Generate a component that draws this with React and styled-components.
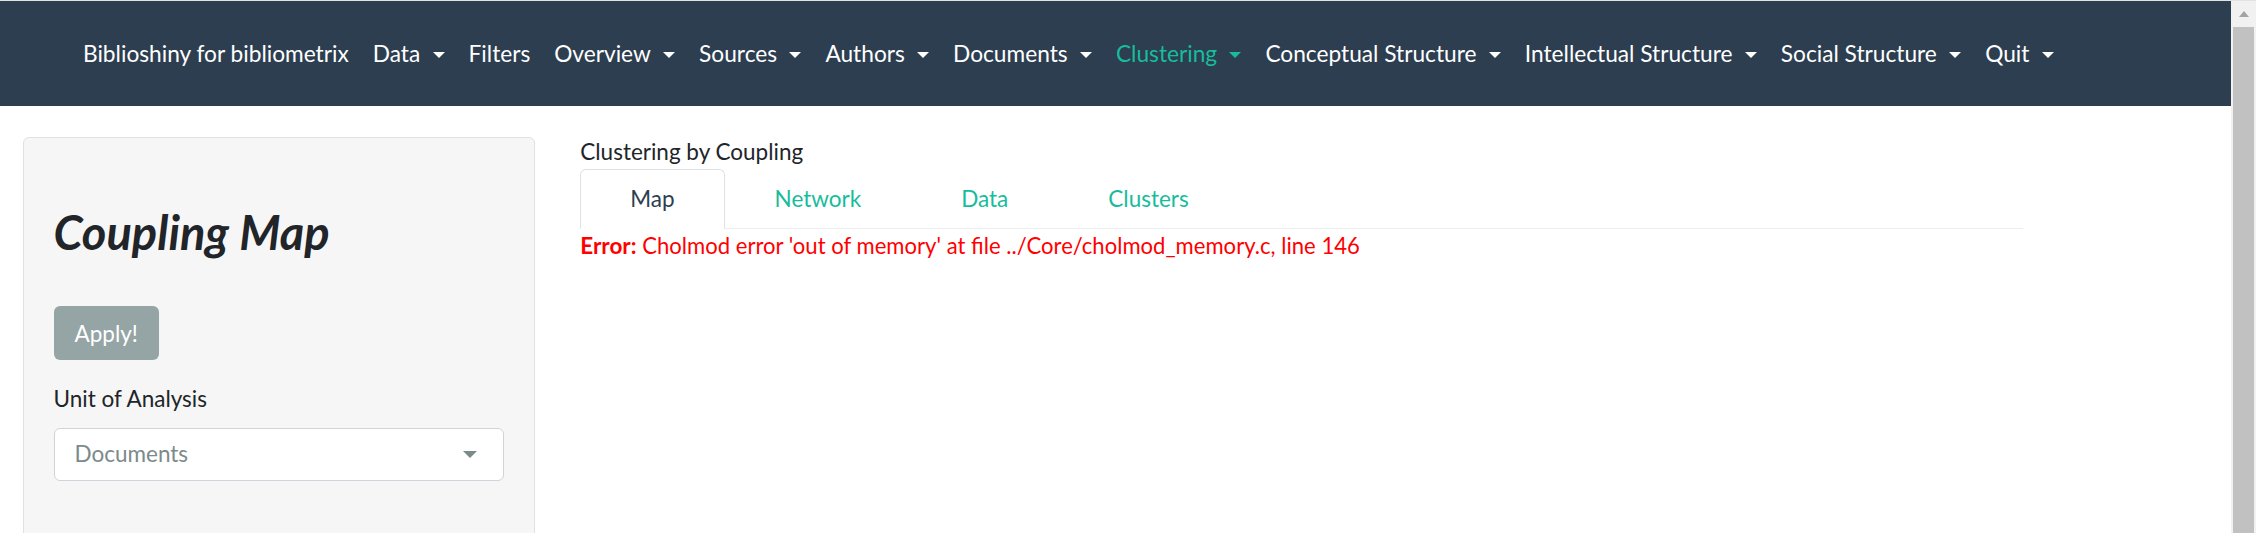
import React from 'react'
import styled, { createGlobalStyle } from 'styled-components'

const GlobalStyle = createGlobalStyle`
  html, body {
    margin: 0;
    padding: 0;
    overflow: hidden;
  }
  body {
    font-family: Lato, "Open Sans", sans-serif;
    font-size: 22.5px;
    line-height: 1.5;
    color: #212529;
    background: #fff;
  }
`

const Page = styled.div`
  display: flex;
  width: 2256px;
  height: 533px;
  border-top: 1px solid #e2e2e2;
  box-sizing: border-box;
  overflow: hidden;
`

const Viewport = styled.div`
  flex: 1;
  min-width: 0;
  display: flex;
  flex-direction: column;
`

const NavBar = styled.nav`
  height: 105px;
  box-sizing: border-box;
  flex-shrink: 0;
  background: #2c3e50;
  display: flex;
  align-items: center;
  padding: 2px 0 0 71px;
  font-size: 22.7px;
`

const NavItem = styled.a`
  display: flex;
  align-items: center;
  padding: 0 12px;
  color: ${(p) => (p.$active ? '#18bc9c' : '#ffffff')};
  white-space: nowrap;
  text-decoration: none;
  cursor: pointer;
`

const Caret = styled.span`
  display: inline-block;
  margin-left: 12.3px;
  margin-top: 2px;
  width: 0;
  height: 0;
  border-top: 6px solid currentColor;
  border-left: 6px solid transparent;
  border-right: 6px solid transparent;
`

const Body = styled.div`
  flex: 1;
  display: grid;
  grid-template-columns: 25% 66.6667%;
  padding-top: 31px;
  min-height: 0;
`

const Column = styled.div`
  padding: 0 22.5px;
  min-width: 0;
`

const Well = styled.div`
  background: #f6f6f6;
  border: 1px solid #e1e1e1;
  border-radius: 6px;
  padding: 66px 30px 30px;
  min-height: 460px;
`

const Title = styled.h2`
  margin: 0 0 46px;
  font-size: 47px;
  font-weight: 700;
  font-style: italic;
  line-height: 56px;
  color: #212529;
`

const ApplyButton = styled.button`
  display: block;
  height: 54px;
  padding: 0 21px;
  border: none;
  border-radius: 6px;
  background: #95a5a6;
  color: #fff;
  font-family: inherit;
  font-size: 22.5px;
  cursor: pointer;
`

const Label = styled.label`
  display: block;
  margin-top: 22px;
  margin-bottom: 12px;
`

const Select = styled.div`
  height: 53px;
  box-sizing: border-box;
  background: #fff;
  border: 1px solid #ced4da;
  border-radius: 6px;
  display: flex;
  align-items: center;
  justify-content: space-between;
  padding: 0 26px 0 20px;
  color: #7b8a8b;
`

const SelectArrow = styled.span`
  width: 0;
  height: 0;
  border-top: 7px solid #7b8a8b;
  border-left: 7.5px solid transparent;
  border-right: 7.5px solid transparent;
`

const Heading = styled.div`
  margin-top: -2px;
`

const Tabs = styled.ul`
  display: flex;
  margin: 0;
  padding: 0;
  list-style: none;
  border-bottom: 1px solid #eceeef;
`

const Tab = styled.li`
  padding: 12px 49px;
  margin-bottom: -1px;
  border: 1px solid ${(p) => (p.$active ? '#dee2e6' : 'transparent')};
  border-bottom-color: ${(p) => (p.$active ? '#fff' : 'transparent')};
  border-radius: 6px 6px 0 0;
  background: ${(p) => (p.$active ? '#fff' : 'transparent')};
  color: ${(p) => (p.$active ? '#2c3e50' : '#18bc9c')};
  cursor: pointer;
`

const ErrorText = styled.div`
  color: #ff0000;
  font-size: 22.1px;
  b {
    font-weight: 700;
    font-size: 22.5px;
  }
`

const Scrollbar = styled.div`
  width: 25px;
  flex-shrink: 0;
  background: #f1f1f1;
  display: flex;
  flex-direction: column;
  align-items: center;
`

const ScrollArrow = styled.div`
  height: 26px;
  display: flex;
  align-items: center;
  justify-content: center;
  &::before {
    content: '';
    width: 0;
    height: 0;
    border-bottom: 6px solid #a3a3a3;
    border-left: 5px solid transparent;
    border-right: 5px solid transparent;
  }
`

const ScrollThumb = styled.div`
  width: 21px;
  flex: 1;
  background: #c1c1c1;
`

const menu = [
  { label: 'Data', dropdown: true },
  { label: 'Filters' },
  { label: 'Overview', dropdown: true },
  { label: 'Sources', dropdown: true },
  { label: 'Authors', dropdown: true },
  { label: 'Documents', dropdown: true },
  { label: 'Clustering', dropdown: true, active: true },
  { label: 'Conceptual Structure', dropdown: true },
  { label: 'Intellectual Structure', dropdown: true },
  { label: 'Social Structure', dropdown: true },
  { label: 'Quit', dropdown: true },
]

const tabs = ['Map', 'Network', 'Data', 'Clusters']

const App = () => {
  return (
    <>
      <GlobalStyle />
      <Page>
        <Viewport>
          <NavBar>
            <NavItem>Biblioshiny for bibliometrix</NavItem>
            {menu.map((m) => (
              <NavItem key={m.label} $active={m.active}>
                {m.label}
                {m.dropdown && <Caret />}
              </NavItem>
            ))}
          </NavBar>
          <Body>
            <Column>
              <Well>
                <Title>Coupling Map</Title>
                <ApplyButton>Apply!</ApplyButton>
                <Label>Unit of Analysis</Label>
                <Select>
                  <span>Documents</span>
                  <SelectArrow />
                </Select>
              </Well>
            </Column>
            <Column>
              <Heading>Clustering by Coupling</Heading>
              <Tabs>
                {tabs.map((t, i) => (
                  <Tab key={t} $active={i === 0}>{t}</Tab>
                ))}
              </Tabs>
              <ErrorText>
                <b>Error:</b> Cholmod error 'out of memory' at file ../Core/cholmod_memory.c, line 146
              </ErrorText>
            </Column>
          </Body>
        </Viewport>
        <Scrollbar>
          <ScrollArrow />
          <ScrollThumb />
        </Scrollbar>
      </Page>
    </>
  )
}

export default App
